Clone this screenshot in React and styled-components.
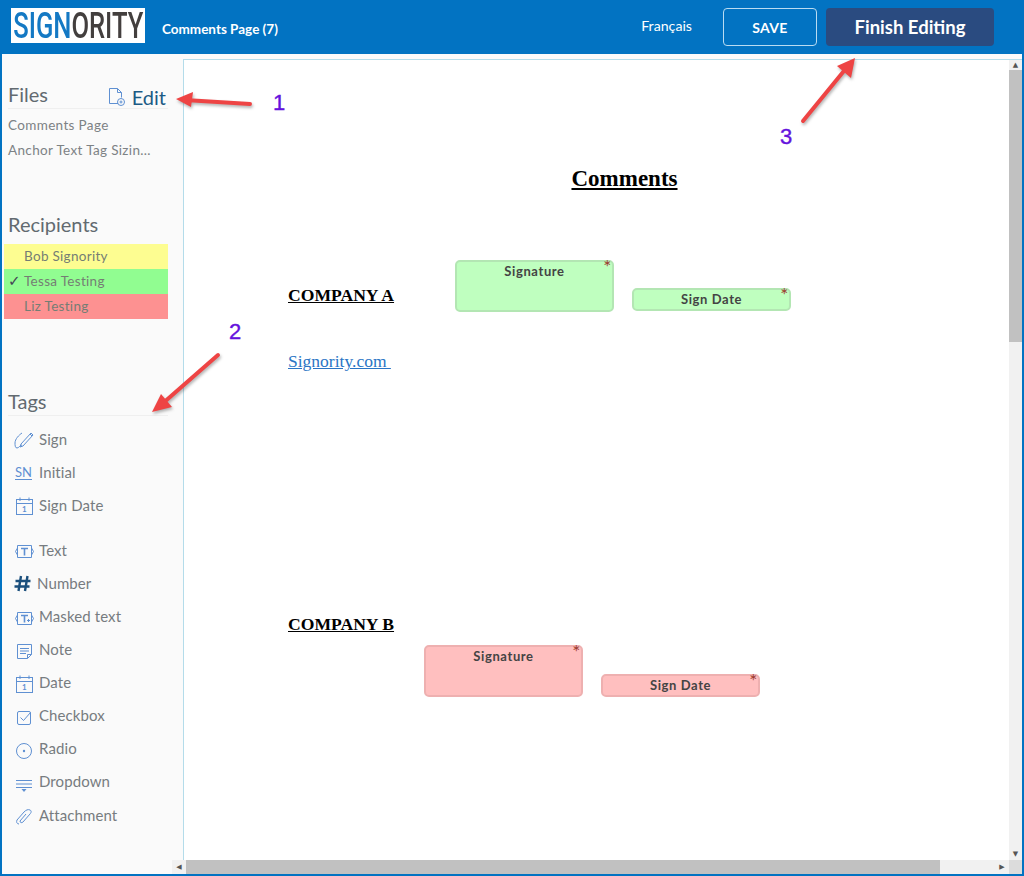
import React from 'react';
import styled, { createGlobalStyle } from 'styled-components';

const BLUE = '#0273c2';
const ICON = '#5f90d2';

const GlobalStyle = createGlobalStyle`
  html, body {
    margin: 0;
    padding: 0;
    background: #fff;
  }
  body {
    font-family: Lato, "Liberation Sans", sans-serif;
  }
`;

const Frame = styled.div`
  position: relative;
  box-sizing: border-box;
  width: 1024px;
  height: 876px;
  display: flex;
  flex-direction: column;
  border-left: 2px solid ${BLUE};
  border-right: 2px solid ${BLUE};
  border-bottom: 2px solid ${BLUE};
  overflow: hidden;
  background: #fafafa;
`;

const Header = styled.header`
  flex: 0 0 54px;
  margin-left: -2px;
  margin-right: -2px;
  display: flex;
  align-items: center;
  background: ${BLUE};
  padding: 0 30px 0 11px;
  color: #fff;
`;

const Logo = styled.div`
  box-sizing: border-box;
  width: 134px;
  height: 35px;
  margin-top: -3px;
  background: #fff;
  display: flex;
  align-items: center;
  justify-content: center;
`;

const LogoText = styled.span`
  flex: none;
  font-family: Roboto, sans-serif;
  font-size: 37px;
  font-weight: 500;
  line-height: 35px;
  white-space: nowrap;
  transform: scaleX(0.69);
  color: #433f3e;
`;

const LogoBlue = styled.span`
  color: #1479c4;
`;

const DocTitle = styled.div`
  margin-left: 17px;
  font-size: 13.5px;
  font-weight: 700;
  margin-top: 3px;
`;

const Spacer = styled.div`
  flex: 1;
`;

const Lang = styled.div`
  font-size: 14.2px;
  margin-right: 31px;
  margin-top: -4px;
`;

const SaveButton = styled.button`
  box-sizing: border-box;
  width: 94px;
  height: 38px;
  margin-right: 9px;
  margin-top: -1px;
  padding-top: 2px;
  border: 1px solid #b9dcf2;
  border-radius: 4px;
  background: transparent;
  color: #fff;
  font: 700 14px Lato, sans-serif;
  letter-spacing: 0.3px;
`;

const FinishButton = styled.button`
  box-sizing: border-box;
  width: 168px;
  height: 38px;
  margin-top: -1px;
  padding-top: 2px;
  border: 0;
  border-radius: 4px;
  background: #2a4b80;
  color: #fff;
  font: 700 18.5px Lato, sans-serif;
`;

const Body = styled.div`
  flex: 1;
  min-height: 0;
  display: flex;
`;

const Sidebar = styled.aside`
  flex: 0 0 181px;
  box-sizing: border-box;
  padding: 28px 0 0 0;
`;

const SectionHead = styled.div`
  display: flex;
  align-items: flex-start;
  justify-content: space-between;
  height: 26px;
  margin: ${p => p.$top || 0}px 15px 0 6px;
  border-bottom: ${p => (p.$rule ? '1px solid #efefef' : '0')};
`;

const SectionTitle = styled.h2`
  margin: 0;
  font-size: 20px;
  line-height: 24px;
  font-weight: 400;
  color: #626a70;
`;

const EditLink = styled.div`
  display: flex;
  align-items: center;
  gap: 5px;
  margin-right: 2px;
  margin-top: 3px;
  font-size: 20px;
  line-height: 24px;
  color: #1c5a85;
`;

const FileList = styled.ul`
  list-style: none;
  margin: 4px 0 0;
  padding: 0 0 0 6px;
`;

const FileItem = styled.li`
  height: 25px;
  line-height: 25px;
  font-size: 13.5px;
  letter-spacing: 0.35px;
  color: #7d8285;
  white-space: nowrap;
`;

const RecipientList = styled.ul`
  list-style: none;
  margin: 6px 15px 0 2px;
  padding: 0;
`;

const Recipient = styled.li`
  height: 25px;
  line-height: 25px;
  padding-left: 4px;
  display: flex;
  font-size: 13.5px;
  letter-spacing: 0.3px;
  color: #757d74;
  background: ${p => p.$color};
`;

const Check = styled.span`
  width: 16px;
  flex: none;
  color: #445;
  font-family: "DejaVu Sans", sans-serif;
  font-size: 15px;
`;

const TagGroup = styled.ul`
  list-style: none;
  margin: ${p => p.$top}px 0 0;
  padding: 0;
`;

const Tag = styled.li`
  height: 33.1px;
  display: flex;
  align-items: center;
  padding-left: ${p => (p.$tight ? 11 : 12)}px;
  font-size: 15px;
  color: #777c80;
`;

const IconBox = styled.span`
  flex: 0 0 ${p => (p.$tight ? 24 : 25)}px;
  display: flex;
  align-items: center;
  height: 20px;
  margin-top: 3px;
`;

const TagLabel = styled.span`
  letter-spacing: 0.1px;
`;

const Viewer = styled.main`
  position: relative;
  flex: 1;
  min-width: 0;
  margin-top: 5px;
  background: #fff;
  border-top: 1px solid #b4dcea;
  border-left: 1px solid #b4dcea;
  display: grid;
  grid-template-columns: 1fr 13px;
  grid-template-rows: 1fr 14px;
`;

const DocPage = styled.div`
  position: relative;
  overflow: hidden;
  padding: 105px 0 0 104px;
  font-family: "Liberation Serif", serif;
  color: #000;
`;

const DocTitleText = styled.h1`
  margin: 0 0 0 -104px;
  width: 881px;
  text-align: center;
  font-size: 23px;
  line-height: 28px;
  font-weight: 700;
  text-decoration: underline;
`;

const Company = styled.div`
  margin-top: ${p => p.$top}px;
  font-size: 17.6px;
  line-height: 21px;
  font-weight: 700;
  text-decoration: underline;
`;

const DocLink = styled.a`
  display: block;
  margin-top: ${p => p.$top}px;
  font-size: 17.5px;
  line-height: 21px;
  color: #2a75c5;
  text-decoration: underline;
  white-space: pre;
`;

const Field = styled.div`
  position: absolute;
  box-sizing: border-box;
  left: ${p => p.$x}px;
  top: ${p => p.$y}px;
  width: 159px;
  height: ${p => p.$h}px;
  border-radius: 5px;
  border: 2px solid ${p => p.$edge};
  background: ${p => p.$fill};
  font-family: Lato, sans-serif;
  font-size: 13px;
  font-weight: 700;
  letter-spacing: 0.6px;
  color: #444;
  text-align: center;
  line-height: 19px;
`;

const Star = styled.span`
  position: absolute;
  right: 0;
  top: -2px;
  font-size: 19px;
  line-height: 14px;
  font-weight: 400;
  color: #9b3a2e;
`;

const VScroll = styled.div`
  display: flex;
  flex-direction: column;
  align-items: stretch;
  background: #f1f1f1;
`;

const HScroll = styled.div`
  display: flex;
  align-items: stretch;
  margin-left: -12px;
  background: #f1f1f1;
`;

const Corner = styled.div`
  background: #dcdcdc;
`;

const ScrollArrow = styled.div`
  flex: 0 0 ${p => p.$size}px;
  display: flex;
  align-items: center;
  justify-content: center;
  font-size: 7px;
  color: #555;
  font-family: "DejaVu Sans", sans-serif;
`;

const VThumb = styled.div`
  flex: 0 0 272px;
  background: #c1c1c1;
`;

const HThumb = styled.div`
  flex: 0 0 754px;
  background: #c1c1c1;
`;

const Grow = styled.div`
  flex: 1;
`;

const Annotations = styled.svg`
  position: absolute;
  left: -2px;
  top: 0;
  width: 1024px;
  height: 876px;
  pointer-events: none;
`;

const CallNumber = styled.span`
  position: absolute;
  left: ${p => p.$x}px;
  top: ${p => p.$y}px;
  font-family: "Liberation Sans", sans-serif;
  font-size: 22px;
  line-height: 24px;
  color: #6512dd;
  -webkit-text-stroke: 0.4px #6512dd;
`;

const Svg = ({ w = 20, h = 20, children }) => (
  <svg width={w} height={h} viewBox={`0 0 ${w} ${h}`} fill="none" stroke={ICON} strokeWidth="1">
    {children}
  </svg>
);

const SignIcon = () => (
  <Svg>
    <path d="M8 3c-3 2-7 6-7 10 0 2 0 5 2 5 2 0 3-3 5-3" />
    <path d="M7 14 17 3l2 2-10 11-3 1z" />
    <path d="M16 4l2 2" />
  </Svg>
);

const InitialIcon = () => (
  <svg width="20" height="20" viewBox="0 0 20 20">
    <text x="1" y="14" fontFamily="Lato, sans-serif" fontSize="13" fill={ICON}>SN</text>
    <path d="M1 16.5h17" stroke={ICON} />
  </svg>
);

const CalendarIcon = () => (
  <Svg>
    <rect x="2.5" y="3.5" width="16" height="15" />
    <path d="M2.5 7.5h16M6 1.5v3.5M15 1.5v3.5" />
    <text x="8" y="16" fontFamily="Lato, sans-serif" fontSize="8" fontWeight="700" fill={ICON} stroke="none">1</text>
  </Svg>
);

const TextIcon = ({ masked }) => (
  <Svg>
    <path d="M3.5 4.5h14v12h-14zM3.5 7l-2 3.5 2 3.5M17.5 7l2 3.5-2 3.5" />
    <path d="M7 7.5h7M10.5 7.5v7" strokeWidth="1.6" />
    {masked && <path d="M13 12.5h3M14.5 11v3" />}
  </Svg>
);

const NumberIcon = () => (
  <svg width="20" height="20" viewBox="0 0 20 20" fill="none" stroke="#1b4f7c" strokeWidth="2.4">
    <path d="M8 2 5.5 17M14.5 2 12 17M2.5 7h15M1.5 12.5h15" />
  </svg>
);

const NoteIcon = () => (
  <Svg>
    <path d="M3.5 3.5h14v10l-4 4h-10z" />
    <path d="M13.5 17.5v-4h4M6 7.5h9M6 10h9M6 12.5h6" />
  </Svg>
);

const CheckboxIcon = () => (
  <Svg>
    <rect x="3.5" y="4.5" width="13" height="13" rx="1.5" />
    <path d="M6.5 10.5l3 3 7-8" />
  </Svg>
);

const RadioIcon = () => (
  <Svg>
    <circle cx="10" cy="11" r="7.5" />
    <circle cx="10" cy="11" r="1.2" fill={ICON} stroke="none" />
  </Svg>
);

const DropdownIcon = () => (
  <Svg>
    <path d="M2 7.5h16M2 11h16M2 14.5h16" />
    <path d="M7.5 16h5l-2.5 3z" fill={ICON} stroke="none" />
  </Svg>
);

const AttachIcon = () => (
  <Svg>
    <path d="M5 18c-2 0-3-2-2-4l7-8c2-2 4-3 6-2s1 3 0 4l-7 8c-1 1-3 1-3-1l6-7" />
  </Svg>
);

const FileAddIcon = () => (
  <svg width="20" height="20" viewBox="0 0 20 20" fill="none" stroke={ICON} strokeWidth="1">
    <path d="M11 16.5H2.5v-15h8l4 4v5" />
    <path d="M10.5 1.5v4h4" />
    <circle cx="14" cy="15" r="3.5" />
    <path d="M12.5 15h3M14 13.5v3" />
  </svg>
);

const primaryTags = [
  { label: 'Sign', Icon: SignIcon },
  { label: 'Initial', Icon: InitialIcon },
  { label: 'Sign Date', Icon: CalendarIcon },
];

const fieldTags = [
  { label: 'Text', Icon: TextIcon },
  { label: 'Number', Icon: NumberIcon, tight: true },
  { label: 'Masked text', Icon: () => <TextIcon masked /> },
  { label: 'Note', Icon: NoteIcon },
  { label: 'Date', Icon: CalendarIcon },
  { label: 'Checkbox', Icon: CheckboxIcon },
  { label: 'Radio', Icon: RadioIcon },
  { label: 'Dropdown', Icon: DropdownIcon },
  { label: 'Attachment', Icon: AttachIcon },
];

const recipients = [
  { name: 'Bob Signority', color: '#fdfd91' },
  { name: 'Tessa Testing', color: '#91fd91', checked: true },
  { name: 'Liz Testing', color: '#fd9191' },
];

const GREEN = { $fill: '#bfffbf', $edge: '#b3e6b3' };
const RED = { $fill: '#ffbfbf', $edge: '#eeb0b0' };

const fields = [
  { label: 'Signature', x: 271, y: 200, h: 52, tone: GREEN },
  { label: 'Sign Date', x: 448, y: 228, h: 23, tone: GREEN },
  { label: 'Signature', x: 240, y: 585, h: 52, tone: RED },
  { label: 'Sign Date', x: 417, y: 614, h: 23, tone: RED },
];

const arrows = [
  'M250 104 L185 100',
  'M218 355 L162 404',
  'M803 121 L848 66',
];

const arrowHeads = [
  '176,99 193,92 191,107',
  '152,412 161,394 172,407',
  '855,58 851,78 837,66',
];

const renderTag = ({ label, Icon, tight }) => (
  <Tag key={label} $tight={tight}>
    <IconBox $tight={tight}><Icon /></IconBox>
    <TagLabel>{label}</TagLabel>
  </Tag>
);

export default function App() {
  return (
    <>
      <GlobalStyle />
      <Frame>
        <Header>
          <Logo>
            <LogoText><LogoBlue>SIGN</LogoBlue>ORITY</LogoText>
          </Logo>
          <DocTitle>Comments Page (7)</DocTitle>
          <Spacer />
          <Lang>Français</Lang>
          <SaveButton>SAVE</SaveButton>
          <FinishButton>Finish Editing</FinishButton>
        </Header>
        <Body>
          <Sidebar>
            <SectionHead $rule>
              <SectionTitle>Files</SectionTitle>
              <EditLink><FileAddIcon />Edit</EditLink>
            </SectionHead>
            <FileList>
              <FileItem>Comments Page</FileItem>
              <FileItem>Anchor Text Tag Sizin...</FileItem>
            </FileList>
            <SectionHead $top={49}>
              <SectionTitle>Recipients</SectionTitle>
            </SectionHead>
            <RecipientList>
              {recipients.map(r => (
                <Recipient key={r.name} $color={r.color}>
                  <Check>{r.checked ? '✓' : ''}</Check>
                  {r.name}
                </Recipient>
              ))}
            </RecipientList>
            <SectionHead $top={70} $rule>
              <SectionTitle>Tags</SectionTitle>
            </SectionHead>
            <TagGroup $top={6}>{primaryTags.map(renderTag)}</TagGroup>
            <TagGroup $top={12}>{fieldTags.map(renderTag)}</TagGroup>
          </Sidebar>
          <Viewer>
            <DocPage>
              <DocTitleText>Comments</DocTitleText>
              <Company $top={92}>COMPANY A</Company>
              <DocLink $top={45} href="#">Signority.com </DocLink>
              <Company $top={242}>COMPANY B</Company>
              {fields.map(f => (
                <Field key={f.x} $x={f.x} $y={f.y} $h={f.h} {...f.tone}>
                  {f.label}
                  <Star>*</Star>
                </Field>
              ))}
            </DocPage>
            <VScroll>
              <ScrollArrow $size={10}>▲</ScrollArrow>
              <VThumb />
              <Grow />
              <ScrollArrow $size={12}>▼</ScrollArrow>
            </VScroll>
            <HScroll>
              <ScrollArrow $size={14}>◀</ScrollArrow>
              <HThumb />
              <Grow />
              <ScrollArrow $size={14}>▶</ScrollArrow>
            </HScroll>
            <Corner />
          </Viewer>
        </Body>
        <Annotations viewBox="0 0 1024 876">
          <g style={{ filter: 'drop-shadow(1px 2px 1.5px rgba(0,0,0,0.3))' }}>
            {arrows.map(d => (
              <path key={d} d={d} stroke="#ee4444" strokeWidth="4" strokeLinecap="round" fill="none" />
            ))}
            {arrowHeads.map(p => (
              <polygon key={p} points={p} fill="#ee4444" />
            ))}
          </g>
        </Annotations>
        <CallNumber $x={271} $y={91}>1</CallNumber>
        <CallNumber $x={227} $y={320}>2</CallNumber>
        <CallNumber $x={778} $y={125}>3</CallNumber>
      </Frame>
    </>
  );
}
